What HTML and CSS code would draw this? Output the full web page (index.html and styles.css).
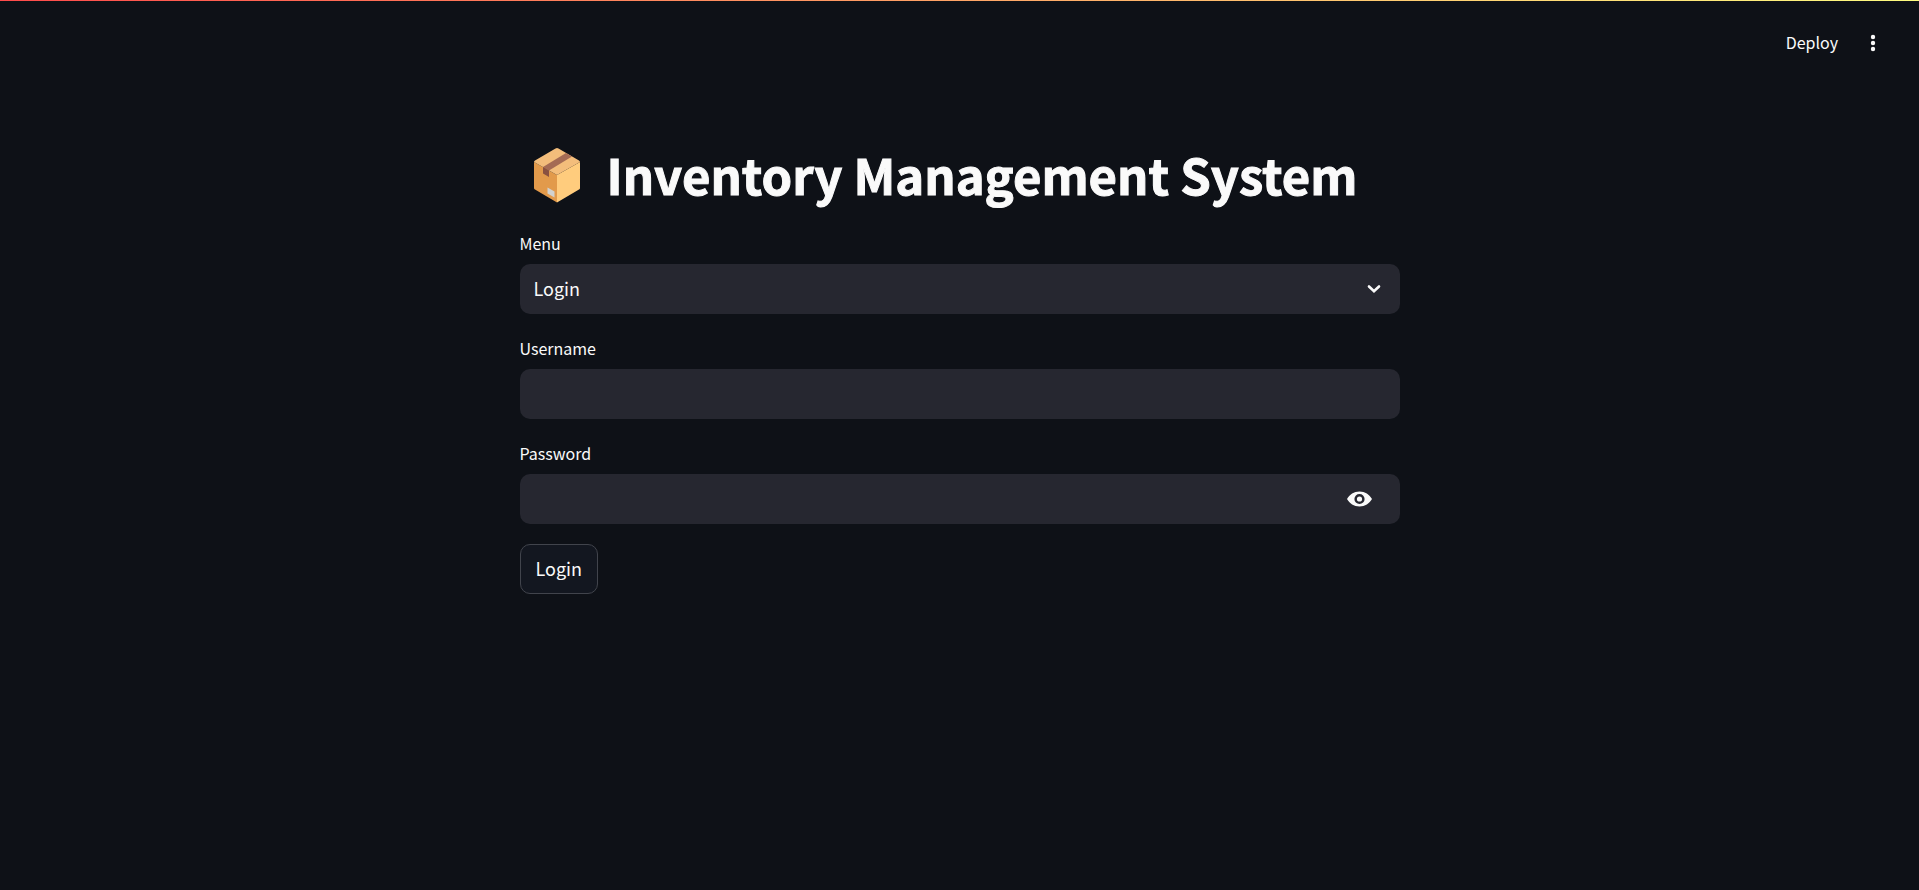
FILE: index.html
```html
<!DOCTYPE html>
<html lang="en">
<head>
<meta charset="utf-8">
<meta name="viewport" content="width=device-width, initial-scale=1">
<title>Inventory Management System</title>
<link rel="stylesheet" href="styles.css">
</head>
<body>
<header class="toolbar">
  <button class="toolbar-button" type="button">Deploy</button>
  <button class="toolbar-button" type="button" aria-label="Main menu">
    <svg class="dots" viewBox="0 0 6 18" aria-hidden="true"><circle cx="3" cy="3" r="2.2"/><circle cx="3" cy="9" r="2.2"/><circle cx="3" cy="15" r="2.2"/></svg>
  </button>
</header>
<main class="page">
  <h1 class="title">
    <svg class="box" viewBox="0 0 48 56" aria-hidden="true">
      <path fill="#e29a4b" d="M1 15 24 28V55.500L2 42.500Q1 42 1 41Z"/>
      <path fill="#ffcc7d" d="M24 28 47 15V41Q47 42 46 42.500L24 55.500Z"/>
      <path fill="#f3bd7b" d="M1 15Q1 14 2 13.500L22.500 1.500Q24 .500 25.500 1.500L46 13.500Q47 14 47 15L24 28Z"/>
      <path fill="#a56b54" d="M10 20 33 6 39 9.500 16 23.500Z"/>
      <path fill="#8a5140" d="M10 20 16 23.500V30L10 26.500Z"/>
      <path fill="#d2d2cf" d="M14.500 40.500 21.500 44.500V50.500L14.500 46.500Z"/>
    </svg>
    <span class="title-text">Inventory Management System</span>
  </h1>
  <form class="form">
    <div class="field">
      <label class="label" for="menu">Menu</label>
      <div class="control">
        <select class="input" id="menu"><option>Login</option></select>
        <svg class="chevron" viewBox="0 0 14 10" aria-hidden="true"><path d="M2 2.500 7 7.300 12 2.500"/></svg>
      </div>
    </div>
    <div class="field">
      <label class="label" for="username">Username</label>
      <input class="input" id="username" type="text">
    </div>
    <div class="field">
      <label class="label" for="password">Password</label>
      <div class="control">
        <input class="input" id="password" type="password">
        <button class="reveal" type="button" aria-label="Show password">
          <svg class="eye" viewBox="0 0 25 16" aria-hidden="true"><path fill-rule="evenodd" d="M12.500 .500C7 .500 2.500 3.500 0 8c2.500 4.500 7 7.500 12.500 7.500S22.500 12.500 25 8C22.500 3.500 18 .500 12.500 .500Zm0 12.600a5.100 5.100 0 1 1 0-10.200 5.100 5.100 0 0 1 0 10.200Z"/><circle cx="12.500" cy="8" r="2.600"/></svg>
        </button>
      </div>
    </div>
    <button class="submit" type="button">Login</button>
  </form>
</main>
</body>
</html>
```
FILE: styles.css
```css
* {
  box-sizing: border-box;
}

body {
  margin: 0;
  min-height: 100vh;
  background: #0e1117;
  color: #fafafa;
  font-family: "Noto Sans CJK SC", "Noto Sans", sans-serif;
  font-size: 18px;
  line-height: 28px;
}

body::before {
  content: "";
  display: block;
  height: 1px;
  background: linear-gradient(90deg, #ff4b4b, #fffd80);
}

button,
input,
select {
  color: inherit;
  font: inherit;
}

.toolbar {
  display: flex;
  justify-content: flex-end;
  align-items: center;
  gap: 7px;
  height: 84px;
  padding: 0 28px;
}

.toolbar-button {
  display: flex;
  align-items: center;
  height: 30px;
  padding: 0 10px 2px;
  border: 0;
  background: none;
  font-size: 16px;
}

.dots {
  width: 6px;
  height: 18px;
  margin: 2px 5px 0;
  fill: currentColor;
}

.page {
  max-width: 920px;
  margin: 0 auto;
  padding: 48px 20px;
}

.title {
  display: flex;
  align-items: center;
  gap: 26px;
  margin: 0 0 12px;
  padding-left: 13px;
  font-size: 49px;
  font-weight: 700;
  line-height: 82px;
}

.title-text {
  padding-bottom: 2px;
  -webkit-text-stroke: 1px currentColor;
}

.box {
  flex: none;
  width: 48px;
  height: 56px;
}

.form {
  display: flex;
  flex-direction: column;
  align-items: flex-start;
  gap: 20px;
}

.field {
  width: 100%;
}

.label {
  display: block;
  margin-bottom: 7px;
  font-size: 16px;
}

.control {
  position: relative;
}

.input {
  display: block;
  width: 100%;
  height: 50px;
  padding: 0 14px 2px;
  border: 0;
  border-radius: 10px;
  background: #262730;
  appearance: none;
}

.chevron {
  position: absolute;
  top: 20px;
  right: 19px;
  width: 14px;
  height: 10px;
  fill: none;
  stroke: currentColor;
  stroke-width: 2.6;
  stroke-linecap: round;
  pointer-events: none;
}

.reveal {
  position: absolute;
  top: 0;
  right: 20px;
  display: flex;
  align-items: center;
  height: 50px;
  padding: 0 8px;
  border: 0;
  background: none;
}

.eye {
  width: 25px;
  height: 16px;
  fill: currentColor;
}

.submit {
  height: 50px;
  padding: 0 15px 2px;
  border: 1px solid #41444c;
  border-radius: 10px;
  background: #131720;
}
```
